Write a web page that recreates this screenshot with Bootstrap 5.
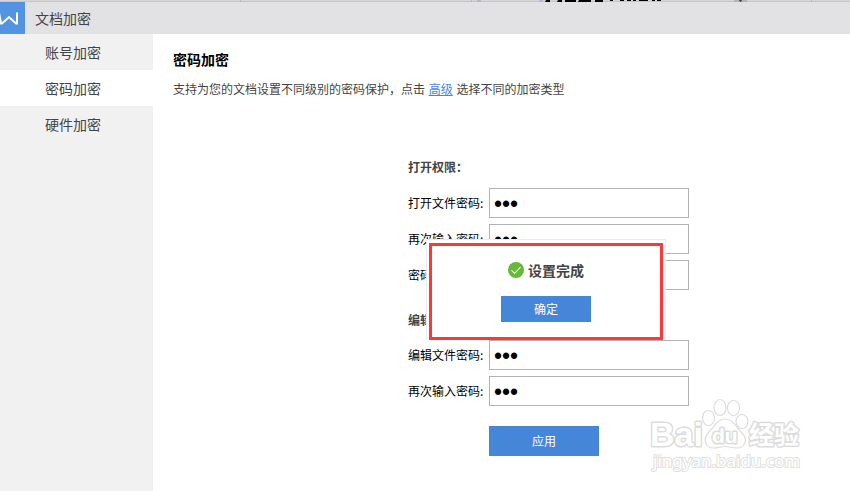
<!DOCTYPE html>
<html lang="zh-CN">
<head>
<meta charset="utf-8">
<meta name="viewport" content="width=device-width, initial-scale=1">
<title>文档加密</title>
<link href="https://cdn.jsdelivr.net/npm/bootstrap@5.3.0/dist/css/bootstrap.min.css" rel="stylesheet">
<style>
  body { font: 12px/18px "Noto Sans CJK SC", sans-serif; color: #444; background: #fff; }
  .edge-strip { height: 2px; background: #d6d6d8; }
  .edge-strip svg { height: 2px; width: 850px; }
  .title-bar { height: 32px; background: #e2e2e4; font-size: 14px; }
  .title-bar h1 { font-size: 14px; font-weight: 400; line-height: 20px; padding: 0 10px 0; }
  .app-logo { width: 25px; height: 32px; background: #5293e2; }
  .side-nav { width: 153px; background: #f1f1f1; }
  .side-nav a { height: 36px; padding: 0 0 0 45px; font-size: 14px; line-height: 36px; color: #444; border-radius: 0; }
  .side-nav a.active { background: #fff; color: #444; }
  .page-body { padding: 15px 20px 0; }
  .page-title { font-size: 14px; line-height: 20px; font-weight: 700; color: #000; margin-bottom: 11px; }
  .page-body a { color: #4686d8; margin: 0 1px; }
  .form-area { width: 281px; margin: 60px 0 0 235px; }
  .form-area legend { font-size: 12px; line-height: 18px; font-weight: 700; margin: 0 0 12px; }
  .field-row { margin-bottom: 6px; }
  .field-row label { width: 81px; color: #000; }
  .field-row input { height: 30px; padding: 2px 4px 0; border: 1px solid #b2b2b2; border-radius: 0; font: 23px/26px "Liberation Sans", sans-serif; color: #000; }
  .edit-group legend { margin: 15px 0 11px; }
  .flat-btn { border: 0; border-radius: 0; background: #4686d8; color: #fff; font-size: 12px; line-height: 18px; }
  .flat-btn:hover { background: #3b79c8; color: #fff; }
  .apply-btn { width: 110px; height: 30px; margin: 14px 0 0 81px; }
  .done-dialog { left: 18px; top: 81px; width: 240px; padding: 3px 2px 0; background: #fff; border: 1px solid #ececec; border-bottom: 0; }
  .dialog-frame { border: 3px solid #fc3939; padding: 14px 0 15px; }
  .dialog-frame h3 { font-size: 14px; line-height: 20px; font-weight: 700; margin: 0; }
  .ok-btn { width: 90px; height: 26px; margin-top: 16px; }
  .site-mark { right: 44px; top: 396px; width: 160px; height: 80px; pointer-events: none; }
</style>
</head>
<body class="d-flex flex-column min-vh-100 position-relative overflow-x-hidden">
<div class="edge-strip d-flex overflow-hidden">
  <svg viewBox="0 0 850 2" class="flex-shrink-0" aria-hidden="true">
    <path d="M0 1h850v1H0z" fill="#c6c6c8"/>
    <path d="M240 0h1v2h-1zM471 0h1v2h-1zM811 0h1v2h-1z" fill="#b5b5b7"/>
    <path d="M477 0h4v2h-4zM539 0h4v2h-4z" fill="#aeb9d2"/>
    <path d="M546 0h4v2h-5zM558 0h4v2h-5zM565 0h11v2h-11zM579 0h12v2h-13zM595 0h8v2h-8zM610 0h3v1h-3zM620 0h4v1h-4zM627 0h4v1h-4zM633 0h3v1h-3zM639 0h9v1h-9zM652 0h3v1h-3zM657 0h4v1h-4z"/>
    <path d="M734 0h13v2h-13z" fill="#b4b4b5"/><path d="M739 0h3l-1 2h-1z" fill="#444"/>
  </svg>
</div>
<header class="title-bar d-flex align-items-center flex-shrink-0">
  <svg class="app-logo flex-shrink-0" viewBox="0 0 25 32" role="img" aria-label="WPS">
    <path d="M-1 10.5L1 21.5H2L9 15L16 21.5H17V10.5" fill="none" stroke="#fff" stroke-width="2"/>
  </svg>
  <h1 class="mb-0">文档加密</h1>
</header>
<div class="d-flex flex-grow-1">
  <nav class="side-nav nav flex-column flex-shrink-0">
    <a class="nav-link" href="#account">账号加密</a>
    <a class="nav-link active" href="#password" aria-current="page">密码加密</a>
    <a class="nav-link" href="#hardware">硬件加密</a>
  </nav>
  <main class="page-body flex-grow-1">
    <h2 class="page-title">密码加密</h2>
    <p class="mb-0">支持为您的文档设置不同级别的密码保护，点击 <a href="#advanced">高级</a> 选择不同的加密类型</p>
    <form class="form-area position-relative">
      <fieldset>
        <legend>打开权限：</legend>
        <div class="field-row d-flex align-items-center"><label class="flex-shrink-0" for="openPwd">打开文件密码:</label><input class="form-control" type="password" id="openPwd" value="123" autocomplete="off"></div>
        <div class="field-row d-flex align-items-center"><label class="flex-shrink-0" for="openPwd2">再次输入密码:</label><input class="form-control" type="password" id="openPwd2" value="123" autocomplete="off"></div>
        <div class="field-row d-flex align-items-center"><label class="flex-shrink-0" for="pwdHint">密码提示:</label><input class="form-control" type="text" id="pwdHint"></div>
      </fieldset>
      <fieldset class="edit-group">
        <legend>编辑权限：</legend>
        <div class="field-row d-flex align-items-center"><label class="flex-shrink-0" for="editPwd">编辑文件密码:</label><input class="form-control" type="password" id="editPwd" value="123" autocomplete="off"></div>
        <div class="field-row d-flex align-items-center"><label class="flex-shrink-0" for="editPwd2">再次输入密码:</label><input class="form-control" type="password" id="editPwd2" value="123" autocomplete="off"></div>
      </fieldset>
      <button type="button" class="btn flat-btn apply-btn p-0">应用</button>
      <div class="done-dialog position-absolute" role="dialog" aria-labelledby="doneTitle">
        <div class="dialog-frame d-flex flex-column align-items-center">
          <div class="d-flex align-items-center gap-1">
            <svg width="16" height="16" viewBox="0 0 16 16" aria-hidden="true"><circle cx="8" cy="8" r="8" fill="#65b83a"/><path d="M3.5 8.3L6.7 11.3L12.5 5.2" fill="none" stroke="#fff" stroke-width="1.1"/></svg>
            <h3 id="doneTitle">设置完成</h3>
          </div>
          <button type="button" class="btn flat-btn ok-btn p-0">确定</button>
        </div>
      </div>
    </form>
  </main>
</div>
<svg class="site-mark position-absolute" viewBox="0 0 160 80" role="img" aria-label="Baidu 经验">
  <g fill="#fff" stroke="#dcdcdc" stroke-width="1.2">
    <ellipse cx="62.500" cy="22" rx="6" ry="7.500"/>
    <ellipse cx="74" cy="11.500" rx="6" ry="8"/>
    <ellipse cx="87.500" cy="12" rx="6" ry="7.500"/>
    <ellipse cx="96" cy="25.500" rx="6" ry="7"/>
    <path d="M79 23C87 23 90 31 95 36C103 43 99 52 91 52C86 52 84 50.500 79 50.500C74 50.500 72 52 68 52C59 52 56 43 63 36C68 31 71 23 79 23Z"/>
    <g font-family="Liberation Sans, sans-serif" font-weight="700" paint-order="stroke" stroke-width="3" stroke-linejoin="round">
      <text x="4" y="50" font-size="34">Bai</text>
      <text x="66" y="47" font-size="21">du</text>
      <text x="103" y="48" font-size="25" font-family="Noto Sans CJK SC, sans-serif">经验</text>
    </g>
    <text x="7" y="71" font-size="17" font-family="Noto Sans, sans-serif" paint-order="stroke" stroke-width="2" stroke="#e0e0e0">jingyan.baidu.com</text>
  </g>
</svg>
<script src="https://cdn.jsdelivr.net/npm/bootstrap@5.3.0/dist/js/bootstrap.bundle.min.js"></script>
</body>
</html>
